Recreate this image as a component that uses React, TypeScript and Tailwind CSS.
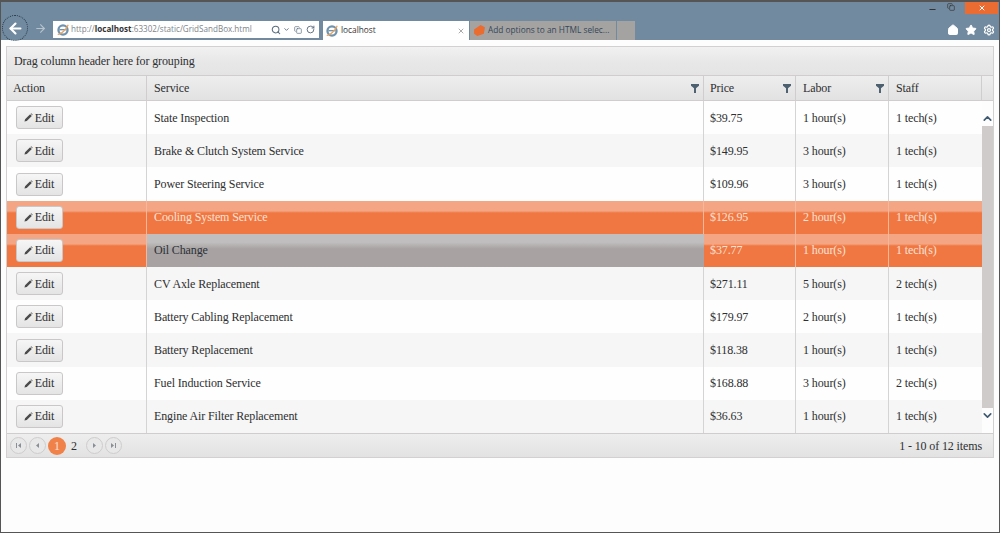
import React from 'react';
import { ArrowLeft, ArrowRight, Search, RotateCw, Home, Star, Settings, X, Minus, ChevronUp, ChevronDown, ChevronDown as Caret, Copy } from 'lucide-react';

interface ServiceRow {
  service: string;
  price: string;
  labor: string;
  staff: string;
}

const rows: ServiceRow[] = [
  { service: 'State Inspection', price: '$39.75', labor: '1 hour(s)', staff: '1 tech(s)' },
  { service: 'Brake & Clutch System Service', price: '$149.95', labor: '3 hour(s)', staff: '1 tech(s)' },
  { service: 'Power Steering Service', price: '$109.96', labor: '3 hour(s)', staff: '1 tech(s)' },
  { service: 'Cooling System Service', price: '$126.95', labor: '2 hour(s)', staff: '1 tech(s)' },
  { service: 'Oil Change', price: '$37.77', labor: '1 hour(s)', staff: '1 tech(s)' },
  { service: 'CV Axle Replacement', price: '$271.11', labor: '5 hour(s)', staff: '2 tech(s)' },
  { service: 'Battery Cabling Replacement', price: '$179.97', labor: '2 hour(s)', staff: '1 tech(s)' },
  { service: 'Battery Replacement', price: '$118.38', labor: '1 hour(s)', staff: '1 tech(s)' },
  { service: 'Fuel Induction Service', price: '$168.88', labor: '3 hour(s)', staff: '2 tech(s)' },
  { service: 'Engine Air Filter Replacement', price: '$36.63', labor: '1 hour(s)', staff: '1 tech(s)' },
];

const IeLogo = () => (
  <svg width="14" height="14" viewBox="0 0 16 16" className="shrink-0">
    <circle cx="8" cy="8" r="5.2" fill="none" stroke="#6f93ad" strokeWidth="2.6" />
    <path d="M4 7.6h8" stroke="#6f93ad" strokeWidth="1.6" />
    <path d="M2 13C5 14 12 7 14 2" fill="none" stroke="#e8a15f" strokeWidth="1.4" />
  </svg>
);

const FilterIcon = () => (
  <svg width="8" height="9" viewBox="0 0 9 10">
    <path d="M0 0h9v2L5.6 4.6V10H3.4V4.6L0 2z" fill="#4d6070" />
  </svg>
);

const PencilIcon = () => (
  <svg width="9" height="9" viewBox="0 0 10 10">
    <path d="M0.5 9.5l0.7-2.6L6.8 1.3l1.9 1.9L3.1 8.8zM7.4 0.7l0.6-0.4 1.7 1.7-0.4 0.6z" fill="#4b4b4b" />
  </svg>
);

const PagerButton = ({ d }: { d: string }) => (
  <div className="flex h-[17px] w-[17px] items-center justify-center rounded-full border border-[#cfcccc] bg-[#e8e8e8]">
    <svg width="7" height="7" viewBox="0 0 7 7">
      <path d={d} fill="#8a8f95" />
    </svg>
  </div>
);

const EditButton = () => (
  <div className="flex h-[23px] w-[47px] items-center justify-center gap-[2px] rounded-[3px] border border-[#c9c7c7] bg-gradient-to-b from-[#f6f6f6] to-[#e4e4e4] pr-[1px] text-[#2e2e2e]">
    <PencilIcon />
    <span>Edit</span>
  </div>
);

const App = () => {
  return (
    <div className="flex h-[533px] w-[1000px] flex-col overflow-hidden border-x border-b border-[#555] bg-[#fdfdfd] font-['Liberation_Serif',serif] text-[12px] tracking-[-0.12px] text-[#2e2f30]">
      {/* browser chrome */}
      <div className="flex h-[40px] shrink-0 flex-col border-t-2 border-[#555] bg-[#728a9f] font-['Open_Sans',sans-serif] text-[8.3px] tracking-normal">
        <div className="flex h-[12px] items-start justify-end text-white">
          <Minus size={9} strokeWidth={3} className="mr-[10px] mt-[3px] text-[#333]" />
          <Copy size={8} strokeWidth={2} className="mr-[10px] mt-[1px] text-[#333]" />
          <div className="mr-px flex h-[12px] w-[33px] items-center justify-center bg-[#ea6c33]">
            <X size={8} strokeWidth={3} />
          </div>
        </div>
        <div className="flex flex-1 items-end">
          <div className="mb-[-1px] ml-[1px] flex h-[26px] w-[26px] items-center justify-center rounded-full border border-dotted border-[#23384a]">
            <ArrowLeft size={17} strokeWidth={3} className="text-white" />
          </div>
          <ArrowRight size={13} strokeWidth={2} className="mb-[5px] ml-[6px] text-[#b6c3cf]" />
          <div className="ml-[6px] mb-[2px] flex h-[17px] w-[266px] items-center bg-white pl-[3px] pr-[4px] text-[8.1px] text-[#7d848a]">
            <IeLogo />
            <span className="ml-[1px] whitespace-nowrap">
              http://<span className="font-bold text-[#333]">localhost</span>:63302/static/GridSandBox.html
            </span>
            <div className="ml-auto flex items-center gap-[2px] text-[#5b6d7d]">
              <Search size={10} strokeWidth={2.5} />
              <Caret size={7} strokeWidth={3} />
              <Copy size={8} strokeWidth={2} className="ml-[2px]" />
              <RotateCw size={9} strokeWidth={2.5} className="ml-[2px]" />
            </div>
          </div>
          <div className="ml-[4px] flex h-[19px] w-[146px] items-center gap-[2px] bg-white pl-[2px] pr-[4px] text-[#333]">
            <IeLogo />
            <span>localhost</span>
            <X size={8} strokeWidth={2.5} className="ml-auto text-[#999]" />
          </div>
          <div className="ml-[1px] flex h-[19px] w-[146px] items-center gap-[2px] bg-[#a5a3a1] pl-[3px] text-[#33475a]">
            <svg width="13" height="13" viewBox="0 0 12 12" className="shrink-0">
              <path d="M1 5l6-4 4 2-1 6-6 2-3-2z" fill="#ea6c2f" />
            </svg>
            <span className="whitespace-nowrap">Add options to an HTML selec...</span>
          </div>
          <div className="ml-[1px] h-[19px] w-[18px] bg-[#a5a3a1]" />
          <div className="ml-auto mb-[4px] flex items-center gap-[6px] pr-[4px] text-white">
            <Home size={12} fill="white" />
            <Star size={12} fill="white" />
            <Settings size={12} strokeWidth={2.5} />
          </div>
        </div>
      </div>

      {/* grid */}
      <div className="mx-[5px] mt-[6px] flex h-[412px] shrink-0 flex-col border border-[#d2d0d0]">
        <div className="flex h-[28px] shrink-0 items-center bg-gradient-to-b from-[#f1f1f1] via-[#e8e8e8] to-[#e4e4e4] pl-[7px]">
          Drag column header here for grouping
        </div>
        <div className="flex h-[26px] shrink-0 border-y border-[#cfcdcd] bg-gradient-to-b from-[#eeeeee] via-[#e8e8e8] to-[#e2e2e2]">
          <div className="flex w-[140px] items-center border-r border-[#cfcdcd] pl-[6px]">Action</div>
          <div className="flex flex-1 items-center justify-between border-r border-[#cfcdcd] pl-[7px] pr-[4px]">
            Service
            <FilterIcon />
          </div>
          <div className="flex w-[92px] items-center justify-between border-r border-[#cfcdcd] pl-[6px] pr-[4px]">
            Price
            <FilterIcon />
          </div>
          <div className="flex w-[93px] items-center justify-between border-r border-[#cfcdcd] pl-[7px] pr-[4px]">
            Labor
            <FilterIcon />
          </div>
          <div className="flex w-[93px] items-center border-r border-[#cfcdcd] pl-[7px]">Staff</div>
          <div className="w-[11px]" />
        </div>
        <div className="flex min-h-0 flex-1">
          <div className="flex min-w-0 flex-1 flex-col">
            {rows.map((row, index) => {
              const selected = index === 3 || index === 4;
              const focused = index === 4;
              const rowClass = selected
                ? 'bg-gradient-to-b from-[#f4a583] from-[30%] to-[#f07741] to-[36%] text-[#f8e2d8]'
                : index % 2 === 1
                  ? 'bg-[#f6f6f6]'
                  : 'bg-[#fefefe]';
              const lineClass = selected ? 'border-[#f5b79b]' : 'border-[#d4d4d4]';
              return (
                <div key={row.service} className={`flex min-h-0 flex-1 ${rowClass}`}>
                  <div className={`flex w-[140px] items-center border-r pl-[9px] ${lineClass}`}>
                    <EditButton />
                  </div>
                  <div
                    className={`flex flex-1 items-center pl-[7px] ${
                      focused
                        ? 'bg-gradient-to-b from-[#c0bebe] from-[25%] to-[#a8a3a2] to-[45%] text-[#2b3138]'
                        : `border-r ${lineClass}`
                    }`}
                  >
                    {row.service}
                  </div>
                  <div className={`flex w-[92px] items-center border-r pl-[6px] ${lineClass}`}>{row.price}</div>
                  <div className={`flex w-[93px] items-center border-r pl-[7px] ${lineClass}`}>{row.labor}</div>
                  <div className={`flex w-[93px] items-center pl-[7px] ${lineClass}`}>{row.staff}</div>
                </div>
              );
            })}
          </div>
          <div className="flex w-[11px] shrink-0 flex-col items-center bg-[#fdfdfd] text-[#3f5a72]">
            <ChevronUp size={13} strokeWidth={3} className="mt-[11px] shrink-0" />
            <div className="mt-[1px] w-full flex-1 bg-[#cfcbcb]" />
            <ChevronDown size={13} strokeWidth={3} className="mb-[11px] mt-[1px] shrink-0" />
          </div>
        </div>
        <div className="flex h-[24px] shrink-0 items-center border-t border-[#cfcdcd] bg-gradient-to-b from-[#eeeeee] via-[#e8e8e8] to-[#e2e2e2] pl-[3px] pr-[11px]">
          <div className="flex items-center gap-[2px]">
            <PagerButton d="M1 1h1v5H1zM6 1v5L3 3.5z" />
            <PagerButton d="M5 1v5L2 3.5z" />
            <div className="flex h-[18px] w-[18px] items-center justify-center rounded-full bg-[#f08148] text-[#f8e2d8]">1</div>
            <div className="w-[16px] pl-[3px]">2</div>
            <PagerButton d="M2 1v5l3-2.5z" />
            <PagerButton d="M1 1v5l3-2.5zM5 1h1v5H5z" />
          </div>
          <span className="ml-auto">1 - 10 of 12 items</span>
        </div>
      </div>
    </div>
  );
};

export default App;
